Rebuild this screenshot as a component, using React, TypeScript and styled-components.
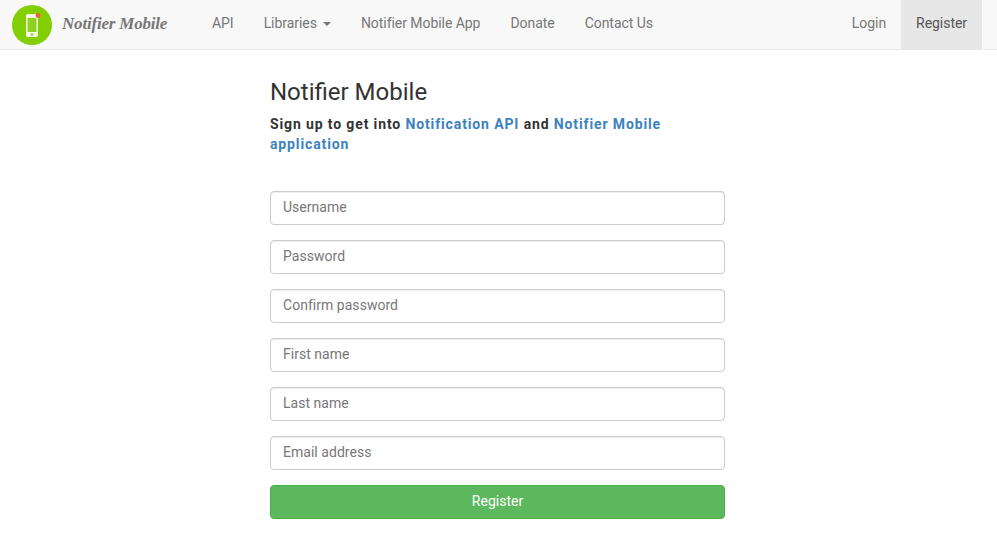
import React from "react";
import styled, { createGlobalStyle } from "styled-components";

const Global = createGlobalStyle`
  * { box-sizing: border-box; }
  html, body { margin: 0; padding: 0; background: #fff; }
  body { font-family: Roboto, "Liberation Sans", sans-serif; font-size: 14px; line-height: 20px; color: #333; }
`;

const Navbar = styled.nav`
  height: 50px;
  background: #f8f8f8;
  border-bottom: 1px solid #e7e7e7;
  display: flex;
  align-items: flex-start;
  padding: 0 15px 0 12px;
`;
const Brand = styled.a`
  display: flex;
  align-items: center;
  gap: 10px;
  height: 49px;
  width: 185px;
  flex: none;
`;
const BrandText = styled.span`
  font-family: "Liberation Serif", serif;
  font-style: italic;
  font-weight: 700;
  font-size: 17px;
  letter-spacing: -0.2px;
  color: #777;
  white-space: nowrap;
  padding-bottom: 1px;
`;
const NavList = styled.div`
  display: flex;
  align-items: stretch;
  height: 49px;
  margin-left: ${p => (p.$right ? "auto" : "0")};
`;
const NavLink = styled.a`
  display: flex;
  align-items: center;
  padding: 0 15px 3px;
  font-size: 14px;
  letter-spacing: -0.05px;
  color: ${p => (p.$active ? "#555" : "#777")};
  background: ${p => (p.$active ? "#e7e7e7" : "transparent")};
  white-space: nowrap;
`;
const Caret = styled.span`
  display: inline-block;
  width: 0;
  height: 0;
  margin-left: 6px;
  margin-top: 2px;
  border-top: 4px solid #777;
  border-left: 4px solid transparent;
  border-right: 4px solid transparent;
`;
const Main = styled.main`
  width: 455px;
  margin-left: 270px;
  padding-top: 26px;
`;
const Title = styled.h3`
  margin: 0;
  font-size: 24px;
  font-weight: 400;
  line-height: 33px;
  color: #333;
`;
const Lead = styled.h5`
  margin: 5px 0 37px;
  font-size: 14px;
  font-weight: 700;
  line-height: 20px;
  letter-spacing: 0.87px;
  color: #333;
`;
const BlueLink = styled.a`
  color: #3b82bf;
`;
const Form = styled.form`
  display: flex;
  flex-direction: column;
  gap: 15px;
`;
const Field = styled.input`
  display: block;
  width: 100%;
  height: 34px;
  padding: 6px 12px 8px;
  font: 14px/20px Roboto, "Liberation Sans", sans-serif;
  letter-spacing: 0.03px;
  color: #555;
  background: #fff;
  border: 1px solid #ccc;
  border-radius: 4px;
  box-shadow: inset 0 1px 1px rgba(0, 0, 0, 0.075);
  outline: none;
  &::placeholder { color: #777; opacity: 1; }
`;
const Submit = styled.button`
  display: block;
  width: 100%;
  height: 34px;
  padding: 0 0 2px;
  font: 14px/20px Roboto, "Liberation Sans", sans-serif;
  color: #fff;
  background: #5cb85c;
  border: 1px solid #4cae4c;
  border-radius: 4px;
`;

const Logo = () => (
  <svg width="40" height="40" viewBox="0 0 40 40" style={{ flex: "none" }}>
    <circle cx="20" cy="20" r="20" fill="#83cf04" />
    <rect x="14" y="9" width="12" height="23" rx="2" fill="#f4fbe6" />
    <rect x="15.5" y="13" width="9" height="14" fill="#8fd21f" />
    <circle cx="20" cy="29.5" r="1.2" fill="#83cf04" />
    <circle cx="26" cy="10.5" r="2.4" fill="#f0603a" />
  </svg>
);

const placeholders = ["Username", "Password", "Confirm password", "First name", "Last name", "Email address"];

export default function App() {
  return (
    <>
      <Global />
      <Navbar>
        <Brand>
          <Logo />
          <BrandText>Notifier Mobile</BrandText>
        </Brand>
        <NavList>
          <NavLink>API</NavLink>
          <NavLink>Libraries <Caret /></NavLink>
          <NavLink>Notifier Mobile App</NavLink>
          <NavLink>Donate</NavLink>
          <NavLink>Contact Us</NavLink>
        </NavList>
        <NavList $right>
          <NavLink>Login</NavLink>
          <NavLink $active>Register</NavLink>
        </NavList>
      </Navbar>
      <Main>
        <Title>Notifier Mobile</Title>
        <Lead>
          Sign up to get into <BlueLink>Notification API</BlueLink> and <BlueLink>Notifier Mobile application</BlueLink>
        </Lead>
        <Form onSubmit={e => e.preventDefault()}>
          {placeholders.map(p => (
            <Field key={p} placeholder={p} type={p.includes("assword") ? "password" : "text"} />
          ))}
          <Submit type="submit">Register</Submit>
        </Form>
      </Main>
    </>
  );
}
